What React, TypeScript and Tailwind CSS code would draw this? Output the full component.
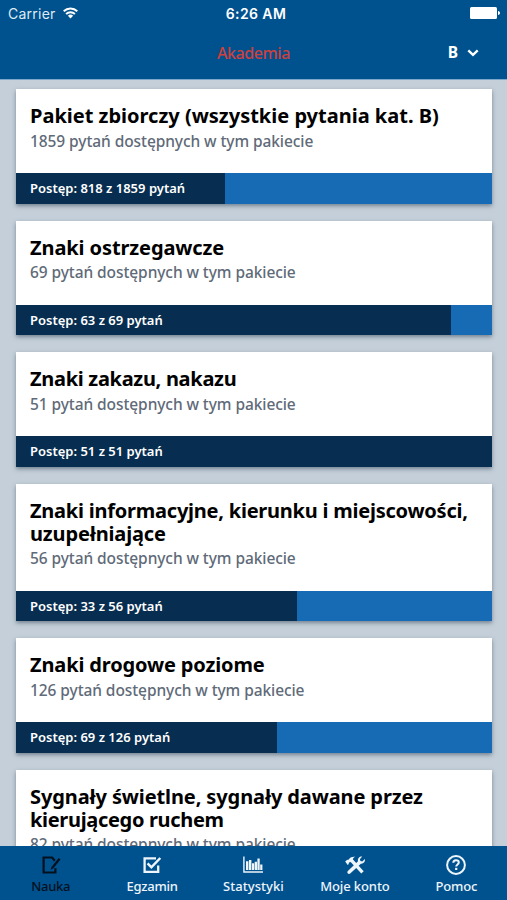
import React from 'react';

interface Pack {
    title: { text: string; tracking: string }[];
    total: number;
    done: number;
    percent: number;
}

const packs: Pack[] = [
    { title: [{ text: 'Pakiet zbiorczy (wszystkie pytania kat. B)', tracking: 'tracking-[0px]' }], total: 1859, done: 818, percent: 44.1 },
    { title: [{ text: 'Znaki ostrzegawcze', tracking: 'tracking-[-0.1px]' }], total: 69, done: 63, percent: 91.5 },
    { title: [{ text: 'Znaki zakazu, nakazu', tracking: 'tracking-[-0.3px]' }], total: 51, done: 51, percent: 100 },
    {
        title: [
            { text: 'Znaki informacyjne, kierunku i miejscowości,', tracking: 'tracking-[-0.23px]' },
            { text: 'uzupełniające', tracking: 'tracking-[-0.15px]' },
        ],
        total: 56,
        done: 33,
        percent: 59.1,
    },
    { title: [{ text: 'Znaki drogowe poziome', tracking: 'tracking-[-0.14px]' }], total: 126, done: 69, percent: 54.9 },
    {
        title: [
            { text: 'Sygnały świetlne, sygnały dawane przez', tracking: 'tracking-[-0.11px]' },
            { text: 'kierującego ruchem', tracking: 'tracking-[-0.32px]' },
        ],
        total: 82,
        done: 40,
        percent: 49,
    },
];

function LearnIcon() {
    return (
        <svg width="20" height="20" viewBox="0 0 20 20" fill="none" stroke="currentColor" strokeWidth="2.2">
            <path d="M13.8 5.8L11.2 2.5H2.6v15h11.8v-4.3" />
            <path d="M18.6 3.7l-6.8 8.5" strokeWidth="2.3" />
            <path d="M10.8 11.3l2.1 1.7-3.4 2z" fill="currentColor" stroke="none" />
        </svg>
    );
}

function ExamIcon() {
    return (
        <svg width="20" height="20" viewBox="0 0 20 20" fill="none" stroke="currentColor">
            <path d="M14 3.3H2.6v13.6h13.6V10.5" strokeWidth="2.3" />
            <path d="M5.6 8.3l3.8 4L18.3 3" strokeWidth="2.5" />
        </svg>
    );
}

function StatsIcon() {
    return (
        <svg width="22" height="20" viewBox="0 0 22 20" fill="currentColor">
            <path d="M1.2 1.4h1.4v14.9H21v1.5H1.2z" />
            <path d="M4 6.2h2.4v8.9H4zM7 4.9h2.4v10.2H7zM10 8.3h2.2v6.8H10zM12.7 6.7H15v8.4h-2.3zM15.4 3.4h2.3v11.7h-2.3zM18.2 9.4h2.2v5.7h-2.2z" />
        </svg>
    );
}

function AccountIcon() {
    return (
        <svg width="22" height="20" viewBox="0 0 22 20" fill="currentColor">
            <path d="M1.2 6.6l2-1.9.9.2 1-1C6.4 2.2 8.6 1.4 11.4 1.8 9.6 2.5 8.8 3.3 9 4.6L19.7 16.2l-2.4 2.3L6.9 7.2l-1-.3-1.2 1 .1 1-1.1 1z" />
            <path d="M18.2 1.6l-2.3 2.7.5 1.8 1.9.4 2.5-2.4c.7 2.5-1.2 4.9-3.9 4.7L6.2 18.6c-1.6 1.2-3.7-.6-2.6-2.3L14 6.3c-.6-2.8 1.5-5 4.2-4.7z" />
        </svg>
    );
}

function HelpIcon() {
    return (
        <svg width="20" height="20" viewBox="0 0 20 20" fill="none" stroke="currentColor">
            <circle cx="10" cy="10" r="8.9" strokeWidth="2" />
            <path d="M7.3 7.8c0-1.6 1.1-2.5 2.7-2.5s2.8.9 2.8 2.3c0 1.9-2.6 2-2.6 4" strokeWidth="2" />
            <path d="M9.1 12.8h2.2V15H9.1z" fill="currentColor" stroke="none" />
        </svg>
    );
}

const tabs = [
    { label: 'Nauka', icon: <LearnIcon />, active: true, text: 'tracking-[-0.25px]' },
    { label: 'Egzamin', icon: <ExamIcon />, active: false, text: 'tracking-[-0.25px]' },
    { label: 'Statystyki', icon: <StatsIcon />, active: false, text: 'tracking-[0.05px]' },
    { label: 'Moje konto', icon: <AccountIcon />, active: false, text: 'tracking-[-0.1px]' },
    { label: 'Pomoc', icon: <HelpIcon />, active: false, text: 'tracking-[-0.15px]' },
];

function Header() {
    return (
        <header className="h-[79.5px] shrink-0 border-b border-[#7ba8cb] bg-[#00528f] text-white">
            <div className="grid h-7 grid-cols-3 items-center pl-2 pr-[7px] font-['Inter',sans-serif] text-[14px]">
                <div className="flex -translate-y-px items-center gap-[7px] text-[#dfeaf3]">
                    <span className="tracking-[0.25px]">Carrier</span>
                    <svg width="15" height="12" viewBox="0 0 15 12" fill="none" stroke="white" strokeWidth="1.9">
                        <path d="M.7 4.3a9.7 9.7 0 0 1 13.6 0M3.1 7a6.3 6.3 0 0 1 8.8 0" />
                        <path d="M7.5 11.4L4.9 8.8a3.8 3.8 0 0 1 5.2 0z" fill="white" stroke="none" />
                    </svg>
                </div>
                <span className="-translate-y-px pl-1 text-center font-semibold tracking-[0.4px]">6:26 AM</span>
                <svg className="-translate-y-px justify-self-end" width="30" height="12" viewBox="0 0 30 12" fill="white">
                    <rect width="27" height="12" rx="1.5" />
                    <path d="M28 4c1.4.3 2 1 2 2s-.6 1.7-2 2z" />
                </svg>
            </div>
            <div className="grid h-[50px] grid-cols-3 items-center pl-[15px] pr-7">
                <span />
                <h1 className="pl-[13px] text-center text-[16px] font-medium tracking-[-0.4px] text-[#cf3f3d]">Akademia</h1>
                <button className="flex items-center gap-[9px] justify-self-end text-[15.5px] font-bold">
                    B
                    <svg width="12" height="8" viewBox="0 0 12 8" fill="none" stroke="white" strokeWidth="2.4">
                        <path d="M1.3 1.4L6 5.8l4.7-4.4" />
                    </svg>
                </button>
            </div>
        </header>
    );
}

function PackCard({ pack }: { pack: Pack }) {
    return (
        <article className="bg-white shadow-[0_2px_4px_rgba(40,60,80,0.5)]">
            <div className="px-[14.5px] pb-[22.5px] pt-[15px]">
                <h2 className="whitespace-nowrap text-[20px] font-bold leading-[23px] text-black">
                    {pack.title.map(line => (
                        <span key={line.text} className={`block ${line.tracking}`}>{line.text}</span>
                    ))}
                </h2>
                <p className="mt-[3.5px] text-[15.5px] font-medium leading-5 tracking-[-0.08px] text-[#606a78]">
                    {pack.total} pytań dostępnych w tym pakiecie
                </p>
            </div>
            <div className="relative h-[30.5px] bg-[#176bb5]">
                <div className="h-full bg-[#072e50]" style={{ width: `${pack.percent}%` }} />
                <span className="absolute inset-y-0 left-[14.5px] text-[13px] font-semibold leading-[30px] text-white">
                    Postęp: {pack.done} z {pack.total} pytań
                </span>
            </div>
        </article>
    );
}

export default function App() {
    return (
        <div className="flex h-[900px] w-[507px] flex-col overflow-hidden bg-[#c4cfd9] font-['Noto_Sans',sans-serif]">
            <Header />
            <main className="flex min-h-0 flex-1 flex-col gap-[17px] overflow-hidden px-[15.5px] pt-[9.5px]">
                {packs.map(pack => (
                    <PackCard key={pack.title[0].text} pack={pack} />
                ))}
            </main>
            <nav className="grid h-[54px] shrink-0 grid-cols-5 bg-[#00528f]">
                {tabs.map(tab => (
                    <button
                        key={tab.label}
                        className={`flex flex-col items-center pt-[9px] ${tab.active ? 'text-[#03101e]' : 'text-[#eef5fb]'}`}
                    >
                        {tab.icon}
                        <span className={`mt-[2px] whitespace-nowrap text-[13px] font-medium leading-[18px] ${tab.text}`}>{tab.label}</span>
                    </button>
                ))}
            </nav>
        </div>
    );
}
